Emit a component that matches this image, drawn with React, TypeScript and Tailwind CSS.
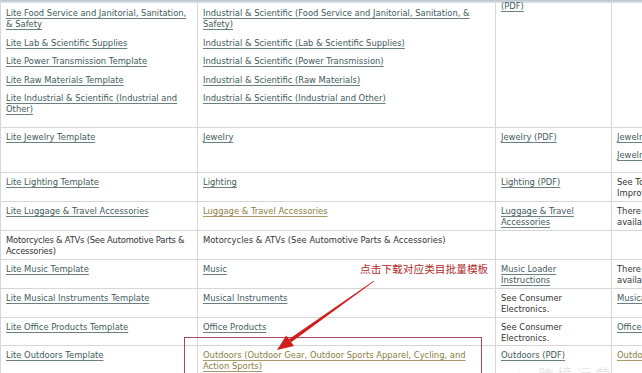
import React from 'react';

type Cell = { text: string; kind?: 'link' | 'visited' | 'plain'; cls?: string }[];

const linkCls = 'underline underline-offset-[1.5px] text-[#3e5a5a] decoration-[#6d8080]';
const visitedCls = 'underline underline-offset-[1.5px] text-[#8c7d3e] decoration-[#a8996a]';
const plainCls = 'text-[#333333]';

function Items({ items }: { items: Cell }) {
  return (
    <div className="flex flex-col gap-[7.5px]">
      {items.map((it, i) => (
        <span
          key={i}
          className={`${it.kind === 'plain' ? plainCls : it.kind === 'visited' ? visitedCls : linkCls} ${it.cls ?? ''}`}
        >
          {it.text.split('\n').map((line, j, arr) => (
            <React.Fragment key={j}>
              {line}
              {j < arr.length - 1 && <br />}
            </React.Fragment>
          ))}
        </span>
      ))}
    </div>
  );
}

interface Row {
  h: string;
  cells: Cell[];
}

const rows: Row[] = [
  {
    h: 'h-[124px]',
    cells: [
      [
        { text: 'Lite Food Service and Janitorial, Sanitation, & Safety' },
        { text: 'Lite Lab & Scientific Supplies' },
        { text: 'Lite Power Transmission Template' },
        { text: 'Lite Raw Materials Template' },
        { text: 'Lite Industrial & Scientific (Industrial and Other)' },
      ],
      [
        { text: 'Industrial & Scientific (Food Service and Janitorial, Sanitation, & Safety)' },
        { text: 'Industrial & Scientific (Lab & Scientific Supplies)' },
        { text: 'Industrial & Scientific (Power Transmission)' },
        { text: 'Industrial & Scientific (Raw Materials)' },
        { text: 'Industrial & Scientific (Industrial and Other)' },
      ],
      [{ text: '(PDF)' }],
      [],
    ],
  },
  {
    h: 'h-[45px]',
    cells: [
      [{ text: 'Lite Jewelry Template' }],
      [{ text: 'Jewelry' }],
      [{ text: 'Jewelry (PDF)' }],
      [{ text: 'Jewelry Browse Tree' }, { text: 'Jewelry Style Guide' }],
    ],
  },
  {
    h: 'h-[29px]',
    cells: [
      [{ text: 'Lite Lighting Template' }],
      [{ text: 'Lighting' }],
      [{ text: 'Lighting (PDF)' }],
      [{ text: 'See Tools & Home\nImprovement.', kind: 'plain' }],
    ],
  },
  {
    h: 'h-[29px]',
    cells: [
      [{ text: 'Lite Luggage & Travel Accessories' }],
      [{ text: 'Luggage & Travel Accessories', kind: 'visited' }],
      [{ text: 'Luggage & Travel\nAccessories' }],
      [{ text: 'There is no BTG\navailable.', kind: 'plain' }],
    ],
  },
  {
    h: 'h-[29px]',
    cells: [
      [
        {
          text: 'Motorcycles & ATVs (See Automotive Parts &\nAccessories)',
          kind: 'plain',
          cls: 'whitespace-nowrap tracking-[-0.22px]',
        },
      ],
      [{ text: 'Motorcycles & ATVs (See Automotive Parts & Accessories)', kind: 'plain' }],
      [],
      [],
    ],
  },
  {
    h: 'h-[29px]',
    cells: [
      [{ text: 'Lite Music Template' }],
      [{ text: 'Music' }],
      [{ text: 'Music Loader\nInstructions' }],
      [{ text: 'There is no BTG\navailable.', kind: 'plain' }],
    ],
  },
  {
    h: 'h-[29px]',
    cells: [
      [{ text: 'Lite Musical Instruments Template' }],
      [{ text: 'Musical Instruments' }],
      [{ text: 'See Consumer\nElectronics.', kind: 'plain' }],
      [{ text: 'Musical Instruments' }],
    ],
  },
  {
    h: 'h-[28px]',
    cells: [
      [{ text: 'Lite Office Products Template' }],
      [{ text: 'Office Products' }],
      [{ text: 'See Consumer\nElectronics.', kind: 'plain' }],
      [{ text: 'Office Products' }],
    ],
  },
  {
    h: 'h-[40px]',
    cells: [
      [{ text: 'Lite Outdoors Template' }],
      [{ text: 'Outdoors (Outdoor Gear, Outdoor Sports Apparel, Cycling, and Action Sports)', kind: 'visited' }],
      [{ text: 'Outdoors (PDF)' }],
      [{ text: 'Outdoors', kind: 'visited' }],
    ],
  },
];

export default function App() {
  return (
    <div className="relative w-[642px] h-[373px] overflow-hidden bg-white font-['DejaVu_Sans','Verdana',sans-serif]">
      {/* browser edge */}
      <div className="h-[3px] bg-gradient-to-b from-[#b9c3cd] to-[#dfe4e9]" />

      <table className="table-fixed border-collapse w-[751px] text-[8.4px] leading-[11px]">
        <colgroup>
          <col className="w-[197px]" />
          <col className="w-[298px]" />
          <col className="w-[116px]" />
          <col className="w-[140px]" />
        </colgroup>
        <tbody>
          {rows.map((row, ri) => (
            <tr key={ri} className={row.h}>
              {row.cells.map((cell, ci) => (
                <td
                  key={ci}
                  className={`align-top border border-[#d6d6d6] pl-[5px] pr-[2px] ${
                    ri === 0 && ci === 2 ? 'pt-0' : ri === 0 ? 'pt-[5px]' : 'pt-[4px]'
                  } ${ri === 0 ? 'border-t-0' : ''}`}
                >
                  <div className={ri === 0 && ci === 2 ? 'mt-[-2px]' : ''}>
                    <Items items={cell} />
                  </div>
                </td>
              ))}
            </tr>
          ))}
        </tbody>
      </table>

      {/* annotation: highlight box */}
      <div className="absolute left-[184px] top-[337px] w-[298px] h-[60px] border border-[#a8485a]" />

      {/* annotation: label */}
      <div className="absolute left-[360px] top-[262px] text-[10.7px] leading-[14px] text-[#b02c2c] font-['Noto_Sans_CJK_SC',sans-serif] whitespace-nowrap">
        点击下载对应类目批量模板
      </div>

      {/* annotation: arrow */}
      <svg className="absolute left-0 top-0 pointer-events-none" width="642" height="373" viewBox="0 0 642 373">
        <polygon points="374.3,281.3 373.7,280.7 288.8,339.2 291.2,342.2" fill="#cf1f1f" />
        <polygon points="277,350 286.2,335.4 294,346" fill="#cf1f1f" />
      </svg>

      {/* faint watermark */}
      <div className="absolute left-[512px] top-[364px] text-[15px] leading-[20px] text-[#e6e6e6] font-['Noto_Sans_CJK_SC',sans-serif] whitespace-nowrap tracking-[4px]">
        · 跨境运营
      </div>
    </div>
  );
}
